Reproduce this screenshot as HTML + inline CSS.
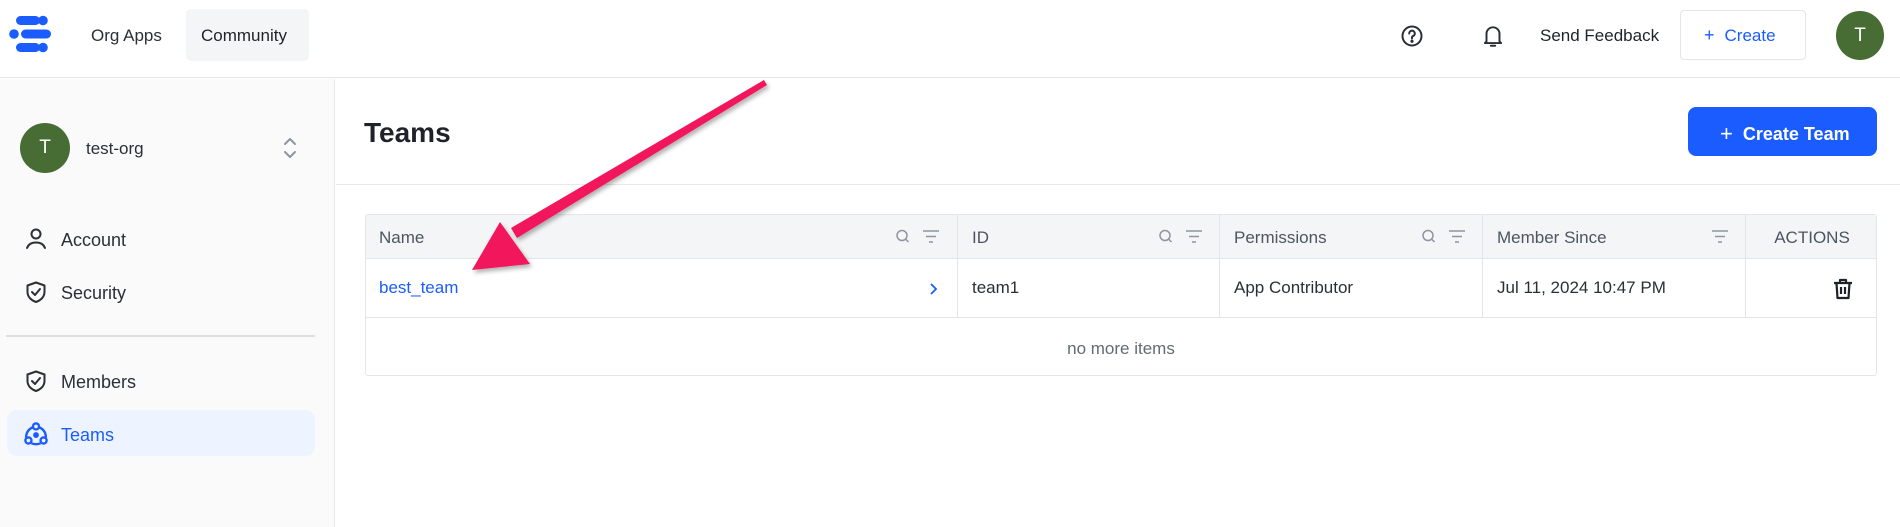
<!DOCTYPE html>
<html><head><meta charset="utf-8"><style>
*{box-sizing:border-box;margin:0;padding:0}
body{width:1900px;height:527px;overflow:hidden;background:#fff;font-family:"Liberation Sans",sans-serif;color:#1f2329;position:relative}
.abs{position:absolute}
.hdr{left:0;top:0;width:1900px;height:78px;border-bottom:1px solid #e3e5e8;background:#fff}
.side{left:0;top:79px;width:335px;height:448px;background:#fafafa;border-right:1px solid #e8e9eb}
.t{white-space:nowrap}
.nav{font-size:18px;color:#2b2f36}
.tbl{left:365px;top:214px;width:1512px;height:162px;border:1px solid #e3e5e8;border-radius:3px}
.hrow{left:0;top:0;width:100%;height:44px;background:#f4f5f7;border-bottom:1px solid #e3e5e8}
.vl{width:1px;background:#e3e5e8}
.ct{font-size:17px;color:#4e5561}
.cd{font-size:17px;color:#2b2f36}
</style></head><body>
<div class="abs hdr"></div>
<svg class="abs" style="left:9px;top:14px" width="46" height="40" viewBox="0 0 46 40">
<g fill="#1a5cff"><rect x="7" y="2" width="24" height="9" rx="4.5"/><circle cx="34" cy="6.5" r="4.8"/>
<circle cx="5" cy="20" r="4.8"/><rect x="12" y="15.5" width="30" height="9" rx="4.5"/>
<rect x="7" y="29" width="24" height="9" rx="4.5"/><circle cx="34" cy="33.5" r="4.8"/></g>
</svg>
<div class="abs t" style="left:91px;top:26px;font-size:17px;color:#2b2f36">Org Apps</div>
<div class="abs" style="left:186px;top:9px;width:123px;height:52px;background:#f4f5f7;border-radius:5px"></div>
<div class="abs t" style="left:201px;top:26px;font-size:17px;color:#1f2329">Community</div>
<svg class="abs" style="left:1400px;top:24px" width="24" height="24" viewBox="0 0 24 24" fill="none" stroke="#2b2f36" stroke-width="2"><circle cx="12" cy="12" r="9.5"/><path d="M9.2 9.5a2.8 2.8 0 1 1 3.8 2.6c-.7.3-1 .9-1 1.6v.8" stroke-linecap="round"/><circle cx="12" cy="17.3" r=".6" fill="#2b2f36"/></svg>
<svg class="abs" style="left:1480px;top:23px" width="26" height="26" viewBox="0 0 24 24" fill="none" stroke="#2b2f36" stroke-width="1.8" stroke-linejoin="round"><path d="M6 17V10a6 6 0 0 1 12 0v7l1.5 1.5h-15z"/><path d="M10 21h4" stroke-linecap="round"/></svg>
<div class="abs t" style="left:1540px;top:26px;font-size:17px;color:#1f2329">Send Feedback</div>
<div class="abs" style="left:1680px;top:10px;width:126px;height:50px;border:1px solid #e3e5e8;border-radius:4px;background:#fff"></div>
<div class="abs t" style="left:1704px;top:25px;font-size:18px;color:#1a5cff">+&nbsp;&nbsp;<span style="font-size:17px">Create</span></div>
<div class="abs" style="left:1836px;top:11px;width:48px;height:49px;border-radius:50%;background:#476c34;color:#fff;font-size:19px;text-align:center;line-height:49px">T</div>

<div class="abs side"></div>
<div class="abs" style="left:20px;top:123px;width:50px;height:50px;border-radius:50%;background:#476c34;color:#fff;font-size:19px;text-align:center;line-height:50px">T</div>
<div class="abs t" style="left:86px;top:139px;font-size:17px;color:#2b2f36">test-org</div>
<svg class="abs" style="left:281px;top:135px" width="18" height="26" viewBox="0 0 18 26" fill="none" stroke="#8f959e" stroke-width="2" stroke-linecap="round" stroke-linejoin="round"><path d="M4 9l5-5 5 5M4 17l5 5 5-5"/></svg>
<svg class="abs" style="left:24px;top:227px" width="24" height="24" viewBox="0 0 24 24" fill="none" stroke="#2b2f36" stroke-width="2"><circle cx="12" cy="7" r="4.5"/><path d="M3 21c1.5-4 5-5.5 9-5.5s7.5 1.5 9 5.5" stroke-linecap="round"/></svg>
<div class="abs t nav" style="left:61px;top:230px">Account</div>
<svg class="abs" style="left:24px;top:280px" width="24" height="24" viewBox="0 0 24 24" fill="none" stroke="#2b2f36" stroke-width="2" stroke-linejoin="round"><path d="M12 2.5l8.5 3v6.5c0 5-4 8.5-8.5 10-4.5-1.5-8.5-5-8.5-10V5.5z"/><path d="M8 12l3 3 5-6" stroke-linecap="round"/></svg>
<div class="abs t nav" style="left:61px;top:283px">Security</div>
<div class="abs" style="left:6px;top:335px;width:309px;height:2px;background:#dedfe3"></div>
<svg class="abs" style="left:24px;top:369px" width="24" height="24" viewBox="0 0 24 24" fill="none" stroke="#2b2f36" stroke-width="2" stroke-linejoin="round"><path d="M12 2.5l8.5 3v6.5c0 5-4 8.5-8.5 10-4.5-1.5-8.5-5-8.5-10V5.5z"/><path d="M8 12l3 3 5-6" stroke-linecap="round"/></svg>
<div class="abs t nav" style="left:61px;top:372px">Members</div>
<div class="abs" style="left:7px;top:410px;width:308px;height:46px;background:#eef4ff;border-radius:10px"></div>
<svg class="abs" style="left:23px;top:421px" width="26" height="26" viewBox="0 0 24 24" fill="none" stroke="#1a5cff" stroke-width="2.2"><circle cx="12" cy="5" r="2.8"/><circle cx="5" cy="18" r="2.8"/><circle cx="19" cy="18" r="2.8"/><path d="M9.3 5.8C5.5 7.2 3 10.5 2.8 15.4M14.7 5.8c3.8 1.4 6.3 4.7 6.5 9.6M7.8 20.6c2.7 1 5.7 1 8.4 0"/><circle cx="12" cy="13" r="1.6" fill="#1a5cff"/></svg>
<div class="abs t nav" style="left:61px;top:425px;color:#1a5cff">Teams</div>

<div class="abs t" style="left:364px;top:117px;font-size:28px;font-weight:bold;color:#1f2329">Teams</div>
<div class="abs" style="left:336px;top:184px;width:1564px;height:1px;background:#e8e9eb"></div>
<div class="abs" style="left:1688px;top:107px;width:189px;height:49px;background:#1a5cff;border-radius:8px"></div>
<div class="abs t" style="left:1720px;top:120px;font-size:18px;color:#fff;font-weight:bold"><span style="font-weight:normal;font-size:22px;position:relative;top:1px">+</span>&nbsp;&nbsp;Create Team</div>

<div class="abs tbl">
<div class="abs hrow"></div>
<div class="abs" style="left:0;top:102px;width:100%;height:1px;background:#e3e5e8"></div>
<div class="abs vl" style="left:591px;top:0;height:102px"></div>
<div class="abs vl" style="left:853px;top:0;height:102px"></div>
<div class="abs vl" style="left:1116px;top:0;height:102px"></div>
<div class="abs vl" style="left:1379px;top:0;height:102px"></div>
<div class="abs t ct" style="left:13px;top:13px">Name</div>
<div class="abs t ct" style="left:606px;top:13px">ID</div>
<div class="abs t ct" style="left:868px;top:13px">Permissions</div>
<div class="abs t ct" style="left:1131px;top:13px">Member Since</div>
<div class="abs t ct" style="left:1400px;top:13px;width:92px;text-align:center">ACTIONS</div>
<div class="abs t cd" style="left:13px;top:63px;color:#1a5cff">best_team</div>
<div class="abs t cd" style="left:606px;top:63px">team1</div>
<div class="abs t cd" style="left:868px;top:63px">App Contributor</div>
<div class="abs t cd" style="left:1131px;top:63px">Jul 11, 2024 10:47 PM</div>
<div class="abs t" style="left:0;top:124px;width:100%;text-align:center;font-size:17px;color:#646a73">no more items</div>
<svg class="abs" style="left:561px;top:66px" width="12" height="16" viewBox="0 0 12 16" fill="none" stroke="#1a5cff" stroke-width="1.8"><path d="M4 3l5 5-5 5"/></svg>
<svg class="abs" style="left:1466px;top:62px" width="22" height="24" viewBox="0 0 22 24" fill="none" stroke="#1f2329" stroke-width="2.2" stroke-linejoin="round"><path d="M2 6h18M8 6V3h6v3M4.5 6l1 15h11l1-15M9 10v7M13 10v7"/></svg>
</div>
<svg class="abs" style="left:895px;top:228px" width="52" height="18" viewBox="0 0 52 18" fill="none" stroke="#8f959e" stroke-width="1.5"><circle cx="7" cy="7.5" r="5"/><path d="M10.5 11l3 3M28 3h16M31 8.5h10M34 14h4"/></svg>
<svg class="abs" style="left:1158px;top:228px" width="52" height="18" viewBox="0 0 52 18" fill="none" stroke="#8f959e" stroke-width="1.5"><circle cx="7" cy="7.5" r="5"/><path d="M10.5 11l3 3M28 3h16M31 8.5h10M34 14h4"/></svg>
<svg class="abs" style="left:1421px;top:228px" width="52" height="18" viewBox="0 0 52 18" fill="none" stroke="#8f959e" stroke-width="1.5"><circle cx="7" cy="7.5" r="5"/><path d="M10.5 11l3 3M28 3h16M31 8.5h10M34 14h4"/></svg>
<svg class="abs" style="left:1684px;top:228px" width="52" height="18" viewBox="0 0 52 18" fill="none" stroke="#8f959e" stroke-width="1.5"><path d="M28 3h16M31 8.5h10M34 14h4"/></svg>
<svg class="abs" style="left:0;top:0" width="1900" height="527" viewBox="0 0 1900 527">
<defs><filter id="sh"><feDropShadow dx="2" dy="3" stdDeviation="2" flood-color="#000" flood-opacity="0.3"/></filter></defs>
<g filter="url(#sh)" fill="#f2145d"><path d="M764 80l3 5-250 153-6-10z"/><path d="M472 270l28-48 30 42z"/></g>
</svg>
</body></html>
